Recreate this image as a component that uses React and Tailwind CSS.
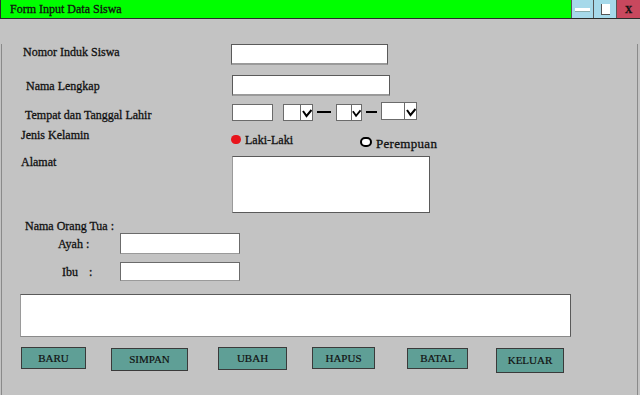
import React from 'react';

const serif = { fontFamily: '"Liberation Serif", "Times New Roman", serif' };

function Dropdown({ width, arrowWidth, height = 17, className = '' }) {
  return (
    <div className={`flex bg-white border border-[#6b6b6b] ${className}`} style={{ width, height }}>
      <div className="flex-1" />
      <div className="border-l border-[#6b6b6b] flex items-end justify-center pb-[2px]" style={{ width: arrowWidth }}>
        <svg width="10" height="9" viewBox="0 0 10 9">
          <polyline points="1,2 4.5,7 9.5,1" fill="none" stroke="#000" strokeWidth="2" />
        </svg>
      </div>
    </div>
  );
}

function Button({ label, className }) {
  return (
    <div className={`flex items-center justify-center bg-[#5f9f96] border border-[#3a3a3a] text-[11px] text-[#111] [-webkit-text-stroke:0.2px_#111] ${className}`}>
      {label}
    </div>
  );
}

export default function App() {
  return (
    <div className="w-[640px] h-[395px] bg-[#c3c3c3] text-[12px] text-[#111] [-webkit-text-stroke:0.3px_#111] overflow-hidden" style={serif}>
      {/* title bar */}
      <div className="flex h-[19px] bg-[#00ff00] border-b border-l border-[#2b2b2b]">
        <div className="flex-1 flex items-center pl-[9px] text-[12px] text-[#111]">Form Input Data Siswa</div>
        <div className="w-[22px] bg-[#a6d9ea] border-l border-[#555] flex items-center justify-center">
          <div className="w-[15px] h-[3px] bg-white shadow-[0_1px_0_#8aa]" />
        </div>
        <div className="w-[23px] bg-[#a6d9ea] border-l border-[#555] flex items-center justify-center">
          <div className="w-[9px] h-[11px] bg-white border-l border-b border-[#555]" />
        </div>
        <div className="w-[24px] bg-[#c8485e] border-l border-[#555] flex items-center justify-center text-[10px] font-bold text-[#111]">X</div>
      </div>

      {/* body */}
      <div className="ml-[1px] w-[637px] h-[372px] border-l border-r border-b border-[#8a8a8a]">
        {/* Nomor Induk */}
        <div className="flex items-start h-[21px] mt-[25px]">
          <div className="ml-[21px] w-[208px] leading-[14px] mt-[1px]">Nomor Induk Siswa</div>
          <div className="w-[157px] h-[21px] bg-white border border-[#5a5a5a] border-b-[#9a9a9a] border-b-2" />
        </div>

        {/* Nama Lengkap */}
        <div className="flex items-center h-[21px] mt-[10px]">
          <div className="ml-[24px] w-[206px]">Nama Lengkap</div>
          <div className="w-[158px] h-[21px] bg-white border border-[#5a5a5a] border-b-[#9a9a9a] border-b-2" />
        </div>

        {/* Tempat dan Tanggal Lahir */}
        <div className="flex items-start h-[17px] mt-[8px]">
          <div className="ml-[23px] w-[207px] leading-[14px] mt-[4px]">Tempat dan Tanggal Lahir</div>
          <div className="w-[41px] h-[17px] bg-white border border-[#6b6b6b]" />
          <Dropdown width={30} arrowWidth={12} className="ml-[10px]" />
          <div className="ml-[4px] mt-[7px] w-[14px] h-[2px] bg-black" />
          <Dropdown width={26} arrowWidth={10} className="ml-[5px]" />
          <div className="ml-[4px] mt-[7px] w-[11px] h-[2px] bg-black" />
          <Dropdown width={36} arrowWidth={12} height={18} className="ml-[4px] -mt-[2px]" />
        </div>

        {/* Jenis Kelamin */}
        <div className="flex items-start h-[22px] mt-[7px]">
          <div className="ml-[19px] w-[210px] leading-[14px]">Jenis Kelamin</div>
          <div className="flex items-start w-[129px]">
            <div className="mt-[7px] w-[10px] h-[9px] rounded-full bg-[#e8141c]" />
            <div className="ml-[4px] mt-[5px] leading-[14px]">Laki-Laki</div>
          </div>
          <div className="mt-[9px] w-[12px] h-[10px] rounded-full bg-white border-2 border-black" />
          <div className="ml-[4px] mt-[9px] leading-[14px] text-[13px] tracking-[0.3px]">Perempuan</div>
        </div>

        {/* Alamat */}
        <div className="flex items-start mt-[5px]">
          <div className="ml-[19px] w-[211px] leading-[14px]">Alamat</div>
          <div className="mt-[1px] w-[198px] h-[57px] bg-white border border-[#5a5a5a] border-l-[#9a9a9a]" />
        </div>

        {/* Nama Orang Tua */}
        <div className="ml-[23px] mt-[6px] h-[9px] leading-[14px]">Nama Orang Tua :</div>
        <div className="flex items-center h-[21px] mt-[5px]">
          <div className="ml-[56px] w-[62px]">Ayah :</div>
          <div className="w-[120px] h-[21px] bg-white border border-[#6b6b6b] border-b-[#9a9a9a]" />
        </div>
        <div className="flex items-center h-[19px] mt-[8px]">
          <div className="ml-[60px] w-[58px]">
            <span>Ibu</span>
            <span className="ml-[11px]">:</span>
          </div>
          <div className="w-[120px] h-[19px] bg-white border border-[#6b6b6b] border-b-[#9a9a9a]" />
        </div>

        {/* keterangan box */}
        <div className="ml-[18px] mt-[13px] w-[551px] h-[43px] bg-white border border-[#5a5a5a] border-l-[#9a9a9a] border-b-[#8a8a8a]" />

        {/* buttons */}
        <div className="flex items-start mt-[10px]">
          <Button label="BARU" className="ml-[19px] w-[65px] h-[22px]" />
          <Button label="SIMPAN" className="ml-[25px] w-[77px] h-[23px] mt-[1px]" />
          <Button label="UBAH" className="ml-[30px] w-[69px] h-[23px]" />
          <Button label="HAPUS" className="ml-[25px] w-[63px] h-[22px]" />
          <Button label="BATAL" className="ml-[32px] w-[61px] h-[21px] mt-[1px]" />
          <Button label="KELUAR" className="ml-[28px] w-[68px] h-[25px] mt-[1px]" />
        </div>
      </div>
    </div>
  );
}
